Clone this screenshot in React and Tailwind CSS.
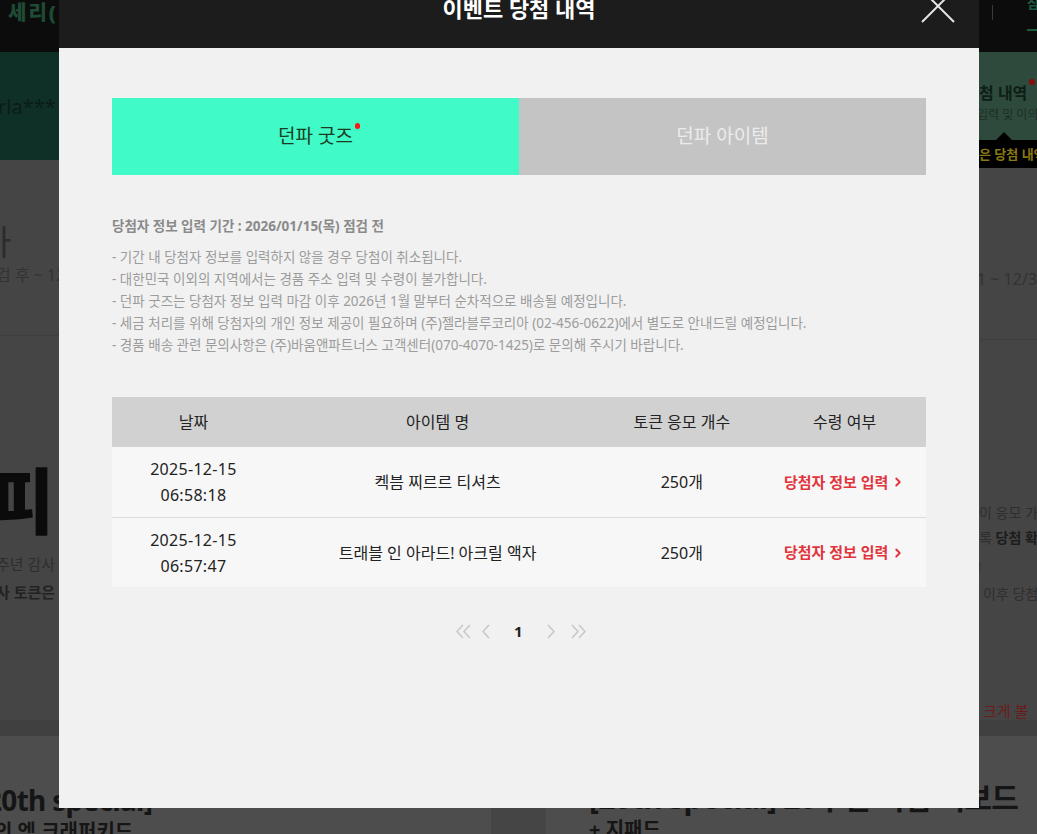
import { ChevronRight } from 'lucide-react';

const notices = [
  '- 기간 내 당첨자 정보를 입력하지 않을 경우 당첨이 취소됩니다.',
  '- 대한민국 이외의 지역에서는 경품 주소 입력 및 수령이 불가합니다.',
  '- 던파 굿즈는 당첨자 정보 입력 마감 이후 2026년 1월 말부터 순차적으로 배송될 예정입니다.',
  '- 세금 처리를 위해 당첨자의 개인 정보 제공이 필요하며 (주)젤라블루코리아 (02-456-0622)에서 별도로 안내드릴 예정입니다.',
  '- 경품 배송 관련 문의사항은 (주)바움앤파트너스 고객센터(070-4070-1425)로 문의해 주시기 바랍니다.',
];

const wins = [
  { date: '2025-12-15', time: '06:58:18', name: '켁븜 찌르르 티셔츠', count: '250개' },
  { date: '2025-12-15', time: '06:57:47', name: '트래블 인 아라드! 아크릴 액자', count: '250개' },
];

const font = { fontFamily: '"Noto Sans", "Noto Sans CJK KR", sans-serif' };

// thin pager chevrons
const Chev = ({ dir = 'left', double = false }) => {
  const pts = dir === 'left' ? '7,1 1,7.5 7,14' : '1,1 7,7.5 1,14';
  return (
    <svg width={double ? 15 : 8} height="15" viewBox={double ? '0 0 15 15' : '0 0 8 15'} fill="none" stroke="#c8c8c8" strokeWidth="1.6">
      <polyline points={pts} />
      {double && <polyline points={pts} transform="translate(7 0)" />}
    </svg>
  );
};

const Backdrop = () => (
  <div className="w-[1037px] h-[834px] overflow-hidden bg-[#454545]">
    {/* top bar */}
    <div className="flex h-[52px] bg-[#0c0c0c] items-start justify-between">
      <div className="pl-[8px] pt-[1px] text-[20px] font-black text-[#1f4a34] leading-[24px] tracking-[2px]">세리(</div>
      <div className="flex items-start">
        <div className="mt-[5px] w-px h-[15px] bg-[#3a3a3a]" />
        <div className="ml-[34px] w-[10px] overflow-hidden">
          <div className="text-[14px] leading-[16px] text-[#1e5a40] font-bold -mt-[5px]">참</div>
          <div className="mt-[18px] h-[2px] bg-[#1e5a40]" />
        </div>
      </div>
    </div>

    <div className="flex h-[668px]">
      {/* left edge */}
      <div className="w-[59px] overflow-hidden whitespace-nowrap">
        <div className="h-[108px] bg-[#0f3026] pt-[43px]">
          <div className="-ml-[2px] text-[20px] leading-[24px] text-[#0a1c16]">rla***</div>
        </div>
        <div className="pt-[62px] -ml-[20px] text-[34px] leading-[40px] text-[#2c2c2c]">사</div>
        <div className="-ml-[4px] mt-[2px] text-[16px] leading-[22px] text-[#333]">검 후 ~ 12</div>
        <div className="mt-[49px] h-px bg-[#3e3e3e]" />
        <div className="mt-[128px] -ml-[12px] text-[72px] leading-[72px] font-black text-[#0b0b0b]">피</div>
        <div className="mt-[15px] -ml-[4px] text-[15px] leading-[26px] text-[#2e2e2e]">주년 감사</div>
        <div className="-ml-[4px] mt-[2px] text-[15px] leading-[26px] font-bold text-[#222]">사 토큰은</div>
      </div>

      <div className="flex-1" />

      {/* right edge */}
      <div className="w-[58px] overflow-hidden whitespace-nowrap">
        <div className="relative h-[88px] bg-[#2d4a3c] pt-[30px]">
          <div className="text-[16px] leading-[22px] font-bold text-[#0e1e16]">첨 내역</div>
          <div className="absolute left-[50px] top-[27px] w-[6px] h-[6px] rounded-full bg-[#8a0c0c]" />
          <div className="-ml-[2px] mt-[3px] text-[12px] leading-[16px] text-[#1c2e24]">입력 및 이의</div>
          <div className="absolute left-[17px] bottom-0 w-0 h-0 border-x-[8px] border-x-transparent border-b-[8px] border-b-black" />
        </div>
        <div className="h-[28px] bg-black pt-[4px] text-[13px] leading-[20px] font-bold text-[#8a7812]">은 당첨 내역</div>
        <div className="pt-[100px] -ml-[2px] text-[16px] leading-[22px] text-[#333]">1 ~ 12/31</div>
        <div className="mt-[49px] h-px bg-[#3e3e3e]" />
        <div className="mt-[160px] text-[14px] leading-[25px] text-[#2e2e2e]">
          <div>이 응모 가</div>
          <div>록 <span className="font-bold text-[#1c1c1c]">당첨 확</span></div>
          <div className="mt-[4px] -ml-[2px]">!</div>
          <div className="mt-[2px] pl-[4px]">이후 당첨</div>
        </div>
        <div className="mt-[94px] pl-[4px] text-[15px] leading-[22px] text-[#6a1c1c]">크게 볼</div>
      </div>
    </div>

    {/* bottom */}
    <div className="h-[16px] bg-[#404040]" />
    <div className="flex h-[98px]">
      <div className="w-[491px] bg-[#4d4d4d] overflow-hidden whitespace-nowrap">
        <div className="pt-[45px] -ml-[14px] text-[28px] leading-[38px] font-bold text-[#151515] tracking-tight">20th special]</div>
        <div className="-ml-[6px] text-[20px] leading-[26px] font-bold text-[#151515]">의 엑 크래퍼키드</div>
      </div>
      <div className="w-[55px] bg-[#454545]" />
      <div className="flex-1 bg-[#4d4d4d] overflow-hidden whitespace-nowrap pl-[43px]">
        <div className="pt-[43px] text-[30px] leading-[38px] font-bold text-[#151515] tracking-tight">[20th special] 20주년 기념 키보드</div>
        <div className="text-[20px] leading-[26px] font-bold text-[#151515]">+ 지패드</div>
      </div>
    </div>
  </div>
);

const Modal = () => (
  <div className="fixed left-[59px] top-[-22px] w-[920px]">
    <div className="relative h-[70px] bg-[#1c1c1c] pt-[19px] text-center">
      <div className="text-[22px] leading-[22px] font-bold text-white">이벤트 당첨 내역</div>
      <button className="absolute right-[24px] top-[11px] w-[34px] h-[34px]">
        <svg viewBox="0 0 34 34" className="w-full h-full" stroke="#e6e6e6" strokeWidth="2">
          <line x1="1" y1="1" x2="33" y2="33" />
          <line x1="33" y1="1" x2="1" y2="33" />
        </svg>
      </button>
    </div>

    <div className="h-[760px] bg-[#f1f1f1] px-[53px] pt-[50px]">
      <div className="grid grid-cols-2 h-[77px] text-[19px]">
        <div className="flex items-center justify-center bg-[#40fbc7] text-[#1d3a22]">
          <span className="relative">
            던파 굿즈
            <span className="absolute -right-[7px] top-[1px] w-[5px] h-[6px] rounded-full bg-[#ff1414]" />
          </span>
        </div>
        <div className="flex items-center justify-center bg-[#c4c4c4] text-[#ececec]">던파 아이템</div>
      </div>

      <div className="mt-[41px] text-[13.5px] leading-[20px] font-bold text-[#8a8a8a]">
        당첨자 정보 입력 기간 : 2026/01/15(목) 점검 전
      </div>
      <ul className="mt-[10px] text-[13.5px] leading-[22px] text-[#9c9c9c]">
        {notices.map(n => (
          <li key={n}>{n}</li>
        ))}
      </ul>

      <div className="mt-[41px]">
        <div className="grid grid-cols-[1fr_2fr_1fr_1fr] h-[50px] items-center bg-[#d1d1d1] text-[16px] text-[#222] text-center">
          <div>날짜</div>
          <div>아이템 명</div>
          <div>토큰 응모 개수</div>
          <div>수령 여부</div>
        </div>
        {wins.map((w, i) => (
          <div
            key={w.time}
            className={`grid grid-cols-[1fr_2fr_1fr_1fr] h-[70px] items-center bg-[#f7f7f7] text-[16px] text-[#222] text-center ${i > 0 ? 'border-t border-[#dcdcdc]' : ''}`}
          >
            <div className="leading-[26px] tracking-[0.3px]">
              <div>{w.date}</div>
              <div>{w.time}</div>
            </div>
            <div>{w.name}</div>
            <div>{w.count}</div>
            <div className="flex items-center justify-center text-[15px] font-bold text-[#e2343c]">
              당첨자 정보 입력
              <ChevronRight size={14} strokeWidth={3.2} className="ml-[3px]" />
            </div>
          </div>
        ))}
      </div>

      <div className="mt-[34px] flex items-center h-[20px] pl-[344px]">
        <Chev dir="left" double />
        <span className="ml-[11px]"><Chev dir="left" /></span>
        <span className="ml-[24px] text-[15px] font-bold text-[#222] leading-[20px]">1</span>
        <span className="ml-[24px]"><Chev dir="right" /></span>
        <span className="ml-[16px]"><Chev dir="right" double /></span>
      </div>
    </div>
  </div>
);

export default function App() {
  return (
    <div className="relative w-[1037px] h-[834px] overflow-hidden" style={font}>
      <Backdrop />
      <Modal />
    </div>
  );
}
